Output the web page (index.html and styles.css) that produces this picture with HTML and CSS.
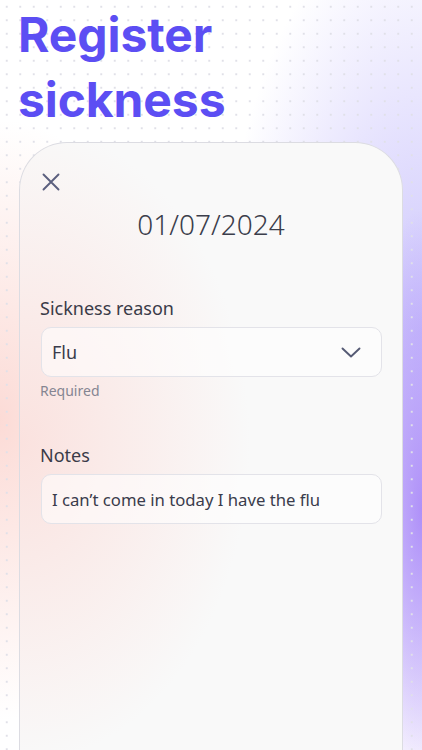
FILE: index.html
```html
<!DOCTYPE html>
<html lang="en">
<head>
<meta charset="utf-8">
<title>Register sickness</title>
<link rel="stylesheet" href="styles.css">
</head>
<body>
<div class="page">
  <h1 class="title">Register<br>sickness</h1>
  <section class="card">
    <button class="close" aria-label="Close">
      <svg width="18" height="18" viewBox="0 0 18 18" fill="none" stroke="#5b5f7e" stroke-width="1.9" stroke-linecap="round"><path d="M1.5 1.5 L16.5 16.5 M16.5 1.5 L1.5 16.5"/></svg>
    </button>
    <div class="date">01/07/2024</div>
    <div class="field field-reason">
      <div class="label">Sickness reason</div>
      <div class="box select">
        <span>Flu</span>
        <svg width="20" height="11" viewBox="0 0 20 11" fill="none" stroke="#555a74" stroke-width="1.9" stroke-linecap="round" stroke-linejoin="round"><path d="M1.5 1.5 L10 9.5 L18.5 1.5"/></svg>
      </div>
      <div class="hint">Required</div>
    </div>
    <div class="field field-notes">
      <div class="label">Notes</div>
      <div class="box notes">I can’t come in today I have the flu</div>
    </div>
  </section>
</div>
</body>
</html>
```
FILE: styles.css
```css
html, body {
  margin: 0;
  padding: 0;
}
body {
  width: 422px;
  height: 750px;
  overflow: hidden;
  font-family: "Noto Sans", "Open Sans", sans-serif;
  background:
    radial-gradient(circle, #e0e0e8 0.7px, rgba(224,224,232,0) 1.3px) 0 0 / 13.5px 13.5px,
    radial-gradient(ellipse 70px 300px at 100% 510px, rgba(172,140,248,0.95), rgba(172,140,248,0) 100%),
    radial-gradient(ellipse 200px 420px at 100% 330px, rgba(196,188,252,0.85), rgba(196,188,252,0) 100%),
    radial-gradient(ellipse 180px 300px at 0 420px, rgba(251,210,204,0.8), rgba(251,210,204,0) 100%),
    #ffffff;
}
.page {
  display: flex;
  flex-direction: column;
}
.title {
  margin: 2px 0 0 18px;
  font-family: Inter, "Liberation Sans", sans-serif;
  font-weight: 700;
  font-size: 48px;
  line-height: 65px;
  letter-spacing: -0.1px;
  color: #5c4ef3;
}
.card {
  margin: 10px 0 0 19px;
  width: 384px;
  min-height: 640px;
  box-sizing: border-box;
  padding: 30px 20px 0 20px;
  border: 1px solid #dcdce2;
  border-bottom: none;
  border-radius: 48px 48px 0 0;
  background:
    radial-gradient(ellipse 230px 320px at 0 300px, rgba(251,220,216,0.8), rgba(251,220,216,0) 100%),
    #f9f9f9;
  display: flex;
  flex-direction: column;
}
.close {
  align-self: flex-start;
  margin: 0 0 0 2px;
  padding: 0;
  border: 0;
  background: none;
  width: 18px;
  height: 18px;
  display: flex;
}
.date {
  margin-top: 14px;
  text-align: center;
  font-size: 28px;
  font-weight: 300;
  line-height: 38px;
  color: #3b3e4b;
}
.field {
  display: flex;
  flex-direction: column;
}
.field-reason {
  margin-top: 53px;
}
.field-notes {
  margin-top: 42px;
}
.label {
  font-size: 18px;
  line-height: 24px;
  color: #3a3b48;
}
.box {
  margin-top: 7px;
  margin-left: 1px;
  height: 50px;
  box-sizing: border-box;
  border: 1px solid #e3e3e9;
  border-radius: 10px;
  background: rgba(255,255,255,0.55);
  display: flex;
  align-items: center;
  padding: 0 20px 0 10px;
  color: #3a3c4c;
}
.select {
  justify-content: space-between;
  font-size: 18px;
}
.notes {
  font-size: 16.7px;
}
.hint {
  margin-top: 4px;
  font-size: 14px;
  line-height: 20px;
  color: #858592;
}
```
